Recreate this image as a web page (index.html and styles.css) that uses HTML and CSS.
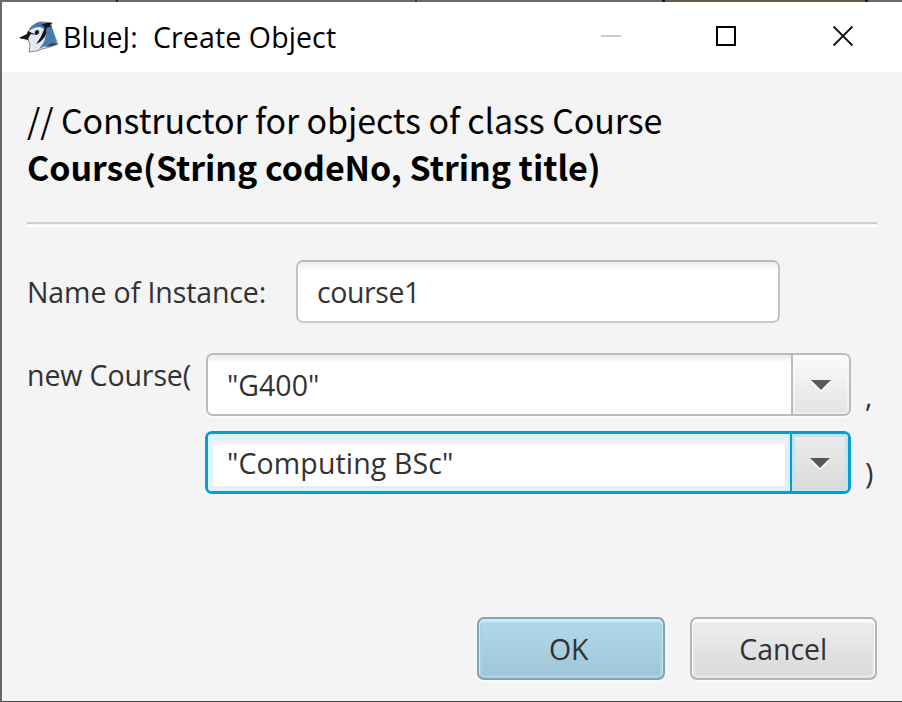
FILE: index.html
```html
<!DOCTYPE html>
<html lang="en">
<head>
<meta charset="utf-8">
<title>BlueJ: Create Object</title>
<link rel="stylesheet" href="styles.css">
</head>
<body>
<div class="backdrop"></div>
<main class="window">
  <header class="titlebar">
    <svg class="logo" viewBox="0 0 40 34" width="40" height="34">
      <path d="M9 12 Q11 7 16 4 Q20 1 24 2 L33 3 L32 7 L36 17 L39 24 L31 27 L23 29 L17 31 L10 32 L11 25 L9 19 L1 18 L9 14 Z" fill="#e4eaf1" stroke="#8c8c88" stroke-width="1"/>
      <path d="M9 12 Q12 4 21 2 L33 3 L30 6 L33 7 L38 24 L31 25 L24 27 L20 29 Q28 20 27 10 L21 7 Q14 7 9 12 Z" fill="#477bac"/>
      <path d="M22 5 Q28 2 33 3 L31 5 L33 7 Q28 6 27 10 Q28 15 24 19 Q21 23 17 24 Q22 18 24 12 Q28 6 22 5 Z" fill="#101519"/>
      <path d="M0 18 L8 14 L9 11 L13 13 L16 14 Q15 10 19 10 Q22 12 18 15 L12 14 L10 17 L9 20 Z" fill="#17191b"/>
      <path d="M26 27 L33 23 L39 24 L33 26 Z" fill="#24435f"/>
    </svg>
    <h1 class="caption">BlueJ:&nbsp; Create Object</h1>
    <svg class="controls" viewBox="0 0 260 24" width="260" height="24">
      <path d="M1 12H21" stroke="#ccc" stroke-width="2"/>
      <rect x="117" y="3" width="18" height="18" fill="none" stroke="#000" stroke-width="2"/>
      <path d="M233.500 2.500L252.500 21.500M252.500 2.500L233.500 21.500" stroke="#111" stroke-width="1.800"/>
    </svg>
  </header>
  <section class="content">
    <div class="comment"><span>// Constructor for objects of class Course</span></div>
    <div class="signature"><span>Course(String codeNo, String title)</span></div>
    <div class="separator"></div>
    <div class="name-row">
      <label class="name-label">Name of Instance:</label>
      <div class="field"><span class="instance">course1</span></div>
    </div>
    <div class="call">
      <span class="call-label">new Course(</span>
      <div class="params">
        <div class="param">
          <div class="combo">
            <div class="value"><span>"G400"</span></div>
            <div class="arrow"><svg viewBox="0 0 20 12" width="20" height="12"><path d="M0 2H20L10 12Z" fill="#fff"/><path d="M0 0H20L10 10Z" fill="#5a5a5a"/></svg></div>
          </div>
          <span class="mark comma">,</span>
        </div>
        <div class="param">
          <div class="combo focused">
            <div class="value"><span class="subject">"Computing BSc"</span></div>
            <div class="arrow"><svg viewBox="0 0 20 12" width="20" height="12"><path d="M0 2H20L10 12Z" fill="#fff"/><path d="M0 0H20L10 10Z" fill="#565656"/></svg></div>
          </div>
          <span class="mark">)</span>
        </div>
      </div>
    </div>
    <footer class="actions">
      <div class="button primary"><span>OK</span></div>
      <div class="button"><span>Cancel</span></div>
    </footer>
  </section>
</main>
</body>
</html>
```
FILE: styles.css
```css
* { box-sizing: border-box; }
body {
  margin: 0;
  width: 902px;
  height: 702px;
  display: flex;
  flex-direction: column;
  overflow: hidden;
  font: 28.5px/40px "Open Sans", "Noto Sans", sans-serif;
  color: #323232;
  background: #f4f4f4;
}
span, label, h1 { white-space: nowrap; }
svg { display: block; flex: none; }
.backdrop {
  flex: none;
  height: 2px;
  background: linear-gradient(90deg, #6b6969 116px, #222 116px, #222 118px, #6b6969 118px, #6b6969 415px, #333 415px, #333 417px, #6b6969 417px, #6b6969 662px, #1e1a18 662px, #1e1a18 665px, #6b5b4b 665px, #6b5b4b 865px, #1e1a18 865px, #1e1a18 868px, #6b6969 868px);
}
.window {
  flex: 1;
  display: flex;
  flex-direction: column;
  border-left: 2px solid #686868;
  border-bottom: 1px solid #444;
}
.titlebar {
  height: 70px;
  flex: none;
  display: flex;
  align-items: center;
  background: #fff;
  padding: 0 42px 0 17px;
}
.logo { margin-bottom: 1px; }
.caption {
  flex: 1;
  margin: 0 0 0 4px;
  font-size: 28.5px;
  font-weight: 400;
  letter-spacing: 0.12px;
  color: #000;
}
.controls { margin-bottom: 2px; }
.content { flex: 1; display: flex; flex-direction: column; padding: 24px 25px 21px; }
.comment, .signature {
  font: 34px/47px "Noto Sans CJK SC", sans-serif;
  color: #000;
}
.comment { letter-spacing: -0.12px; }
.signature { font-weight: 700; letter-spacing: -0.05px; }
.separator {
  margin-top: 32px;
  height: 5px;
  border-top: 2px solid #cecece;
  border-bottom: 2px solid #fff;
}
.name-row { display: flex; align-items: center; margin-top: 33px; height: 62px; }
.name-label { width: 269px; padding-top: 2px; letter-spacing: -0.1px; }
.field, .combo, .button { height: 63px; border: 2px solid #bbb; border-radius: 7px; }
.field {
  width: 484px;
  padding: 10px 19px 0;
  border-color: #bbb #c4c4c4 #ccc;
  background: linear-gradient(#ececec, #fff 9px);
}
.instance { letter-spacing: -0.4px; }
.call { display: flex; margin-top: 31px; }
.call-label { width: 179px; padding-top: 2px; letter-spacing: -0.1px; }
.params { display: grid; gap: 15px; }
.param { display: flex; gap: 14px; height: 63px; }
.combo { display: flex; width: 645px; overflow: hidden; box-shadow: 0 2px 0 #fafafa; }
.value { flex: 1; padding: 10px 19px 0; background: linear-gradient(#ececec, #fff 9px); }
.arrow {
  width: 58px;
  border-left: 2px solid #bbb;
  display: flex;
  align-items: center;
  justify-content: center;
  padding-top: 2px;
  background: linear-gradient(#fbfbfb, #e3e3e3);
  box-shadow: inset 0 0 0 2px #ffffff66;
}
.focused { width: 646px; margin-left: -1px; border: 3px solid #039ed3; box-shadow: none; }
.focused .value { border: 5px solid #def2fa; padding: 4px 14px 0; }
.subject { letter-spacing: 0.13px; }
.focused .arrow {
  width: 58px;
  border-color: #039ed3;
  background: linear-gradient(#ededed, #d9d9d9);
  box-shadow: inset 0 0 0 3px #c9e1ea;
}
.mark { padding-top: 22px; }
.comma { padding-top: 23px; }
.actions { display: flex; justify-content: flex-end; gap: 25px; margin-top: auto; }
.button {
  width: 187.5px;
  padding-top: 10px;
  text-align: center;
  border-color: #b4b4b4;
  background: linear-gradient(#efefef, #d8d8d8);
  box-shadow: 0 2px 0 #fafafa, inset 0 2px 0 1px #fff, inset 0 0 0 3px #e6e6e6;
}
.primary {
  padding-right: 4px;
  border-color: #81a3b3;
  background: linear-gradient(#b2daeb, #9ec5d8);
  box-shadow: 0 2px 0 #fafafa, inset 0 2px 0 1px #cde7f3, inset 0 0 0 3px #a9d1e3;
}
```
